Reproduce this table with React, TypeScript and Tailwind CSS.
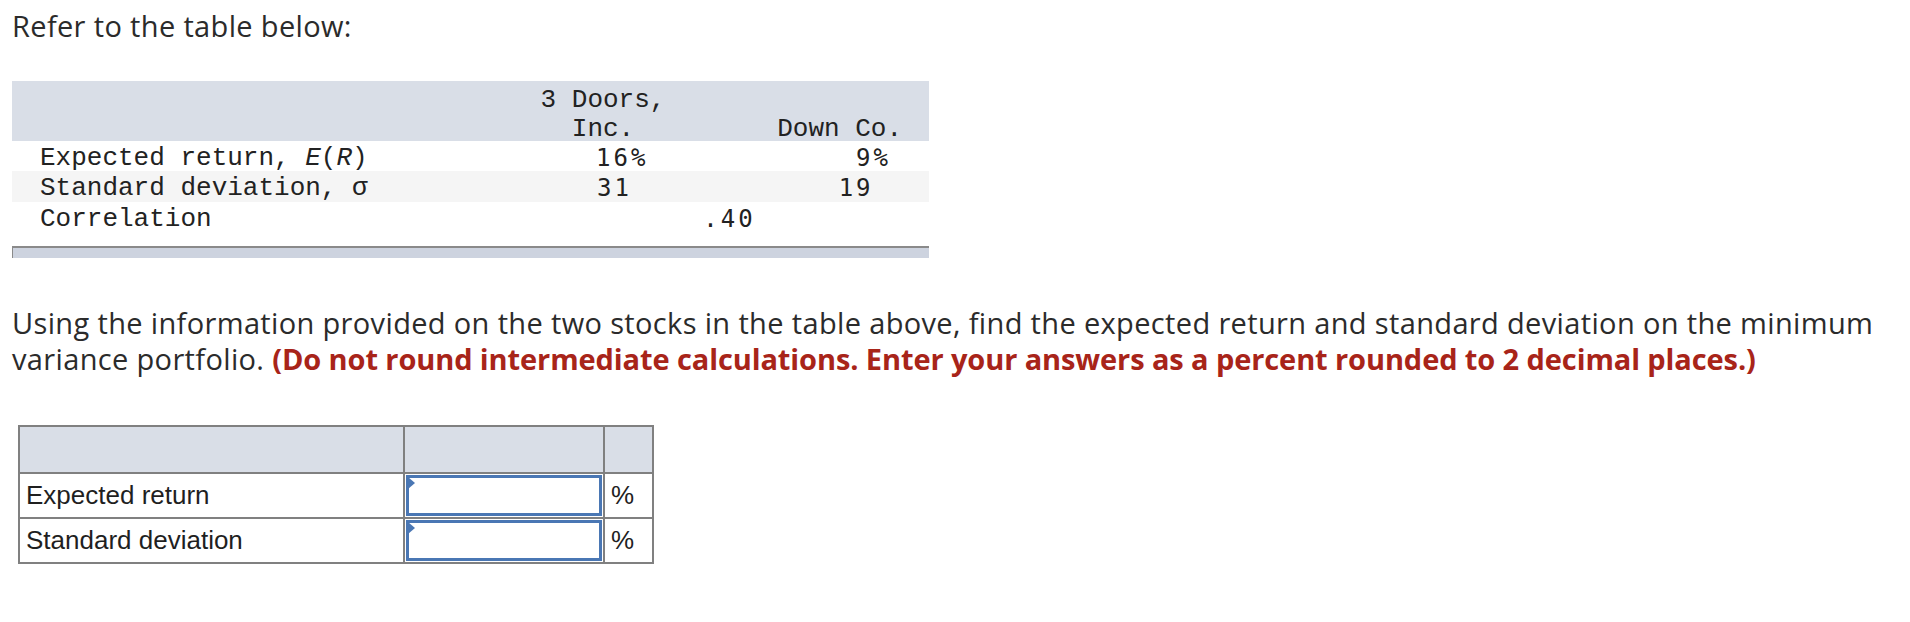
import React from 'react';

const mono = "font-['Liberation_Mono','Courier_New',monospace]";
const num = "font-['DejaVu_Sans_Mono',monospace] text-[24px] tracking-[3px]";

const Hidden = ({ children }: { children: React.ReactNode }) => (
  <span className="invisible">{children}</span>
);

const InputCell = () => (
  <td className="border-2 border-[#808080] p-px">
    <div className="relative h-[41px] border-[3px] border-[#4a77b4] bg-white">
      <div className="absolute -left-px -top-px h-0 w-0 border-y-[6px] border-l-[7px] border-y-transparent border-l-[#4a77b4]" />
    </div>
  </td>
);

export default function App() {
  return (
    <div className="h-[622px] w-[1910px] overflow-hidden bg-white font-['Open_Sans','Lato',sans-serif] text-[#2b2b2b]">
      <p className="pl-3 pt-2 text-[29px] leading-[35px] tracking-[0.35px]">Refer to the table below:</p>

      {/* data table */}
      <div className={`ml-3 mt-[38px] w-[917px] text-[26px] text-[#222] ${mono}`}>
        <div className="grid h-[60px] grid-cols-[518px_146px_253px] items-start bg-[#d9dee7] pt-[5px] leading-[29px]">
          <div />
          <div className="text-center">
            3 Doors,
            <br />
            Inc.
          </div>
          <div className="pr-[27px] pt-[29px] text-right">Down Co.</div>
        </div>
        <div className="grid h-[30px] grid-cols-[518px_146px_253px] items-start pt-[2px] leading-[30px]">
          <div className="pl-[28px]">
            Expected return, <i>E</i>(<i>R</i>)
          </div>
          <div className={`pl-[66px] ${num}`}>16%</div>
          <div className={`pr-[38px] text-right ${num}`}>9%</div>
        </div>
        <div className="grid h-[31px] grid-cols-[518px_146px_253px] items-start bg-[#f5f5f5] pt-[2px] leading-[30px]">
          <div className="pl-[28px]">Standard deviation, σ</div>
          <div className={`pl-[67px] ${num}`}>
            31<Hidden>%</Hidden>
          </div>
          <div className={`pr-[38px] text-right ${num}`}>
            19<Hidden>%</Hidden>
          </div>
        </div>
        <div className="grid h-[30px] grid-cols-[518px_399px] items-start pt-[2px] leading-[30px]">
          <div className="pl-[28px]">Correlation</div>
          <div className={`text-center ${num}`}>.40</div>
        </div>
        <div className="mt-[14px] h-[12px] border-l border-t-2 border-[#8a8a8a] bg-[#cdd3df]" />
      </div>

      {/* question */}
      <p className="mt-[47px] w-[1890px] pl-3 text-[29px] leading-[36px] tracking-[0.35px]">
        Using the information provided on the two stocks in the table above, find the expected return and standard
        deviation on the minimum variance portfolio.{' '}
        <strong className="font-bold tracking-[-0.1px] text-[#a82419]">
          (Do not round intermediate calculations. Enter your answers as a percent rounded to 2 decimal places.)
        </strong>
      </p>

      {/* answer table */}
      <table className="ml-[18px] mt-[48px] border-collapse font-['Liberation_Sans',Arial,sans-serif] text-[26px] text-[#1f1f1f]">
        <tbody>
          <tr className="h-[47px] bg-[#d9dee7]">
            <td className="w-[385px] border-2 border-[#808080]" />
            <td className="w-[200px] border-2 border-[#808080]" />
            <td className="w-[49px] border-2 border-[#808080]" />
          </tr>
          <tr className="h-[45px]">
            <td className="border-2 border-[#808080] pl-[6px]">Expected return</td>
            <InputCell />
            <td className="border-2 border-[#808080] pl-[6px]">%</td>
          </tr>
          <tr className="h-[45px]">
            <td className="border-2 border-[#808080] pl-[6px]">Standard deviation</td>
            <InputCell />
            <td className="border-2 border-[#808080] pl-[6px]">%</td>
          </tr>
        </tbody>
      </table>
    </div>
  );
}
